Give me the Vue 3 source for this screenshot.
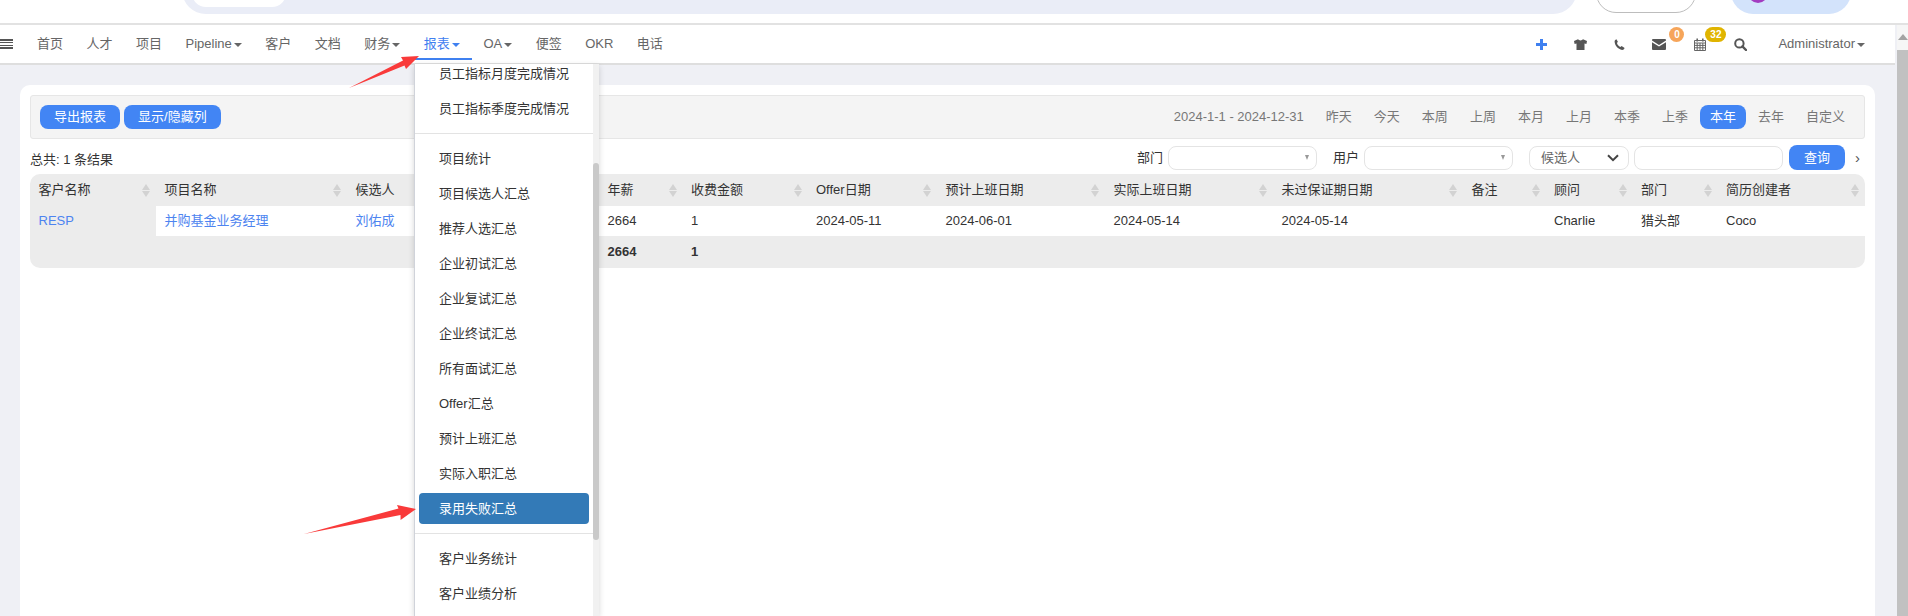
<script setup>
const navItems = [
  { label: '首页' }, { label: '人才' }, { label: '项目' }, { label: 'Pipeline', caret: true },
  { label: '客户' }, { label: '文档' }, { label: '财务', caret: true },
  { label: '报表', caret: true, active: true }, { label: 'OA', caret: true },
  { label: '便签' }, { label: 'OKR' }, { label: '电话' }
]
const ranges = ['昨天', '今天', '本周', '上周', '本月', '上月', '本季', '上季', '本年', '去年', '自定义']
const columns = [
  { t: '客户名称', w: 126 }, { t: '项目名称', w: 191 }, { t: '候选人', w: 252 }, { t: '年薪', w: 83.5 },
  { t: '收费金额', w: 125 }, { t: 'Offer日期', w: 129.5 }, { t: '预计上班日期', w: 168 }, { t: '实际上班日期', w: 168 },
  { t: '未过保证期日期', w: 190 }, { t: '备注', w: 82.5 }, { t: '顾问', w: 87 }, { t: '部门', w: 85 }, { t: '简历创建者', w: 147.5 }
]
const row = ['2664', '1', '2024-05-11', '2024-06-01', '2024-05-14', '2024-05-14', '', 'Charlie', '猎头部', 'Coco']
const menuTop = ['员工指标月度完成情况', '员工指标季度完成情况']
const menuMid = ['项目统计', '项目候选人汇总', '推荐人选汇总', '企业初试汇总', '企业复试汇总', '企业终试汇总', '所有面试汇总', 'Offer汇总', '预计上班汇总', '实际入职汇总', '录用失败汇总']
const menuEnd = ['客户业务统计', '客户业绩分析']
</script>

<template>
  <div class="page">
    <header class="topbar">
      <div class="search-pill"><div class="search-inner"></div></div>
      <div class="top-btn"></div>
      <div class="avatar-pill"><span class="avatar-dot"></span></div>
    </header>
    <div class="main">
      <div class="content">
        <nav class="nav">
          <div class="burger"><i></i><i></i><i></i><i></i></div>
          <a v-for="n in navItems" :key="n.label" class="nav-item" :class="{ active: n.active }">
            {{ n.label }}<span v-if="n.caret" class="caret"></span>
          </a>
          <div class="nav-right">
            <span class="ic w40 plus">
              <svg width="11" height="11" viewBox="0 0 11 11"><path d="M4 0h3v4h4v3H7v4H4V7H0V4h4z" fill="#3f80f0"/></svg>
            </span>
            <span class="ic w39">
              <svg width="13" height="11" viewBox="0 0 13 11"><path d="M4 0.3 L5 1 Q6.5 1.8 8 1 L9 .3 L13 2 L12.4 5 L10.5 4.6 V11 H2.5 V4.6 L.6 5 L0 2 Z" fill="#555"/></svg>
            </span>
            <span class="ic w39">
              <svg width="11" height="11" viewBox="0 0 11 11"><path d="M2.4 .2 L3.9 2.8 L3 4 C3.2 5.6 4.6 7.4 6.4 8 L7.6 7.1 L10.6 9 C10.2 10.2 9.2 11 8.1 10.9 C4 10.4 .8 6.6 .6 2.6 C.5 1.6 1.2 .6 2.4 .2 Z" fill="#555"/></svg>
            </span>
            <span class="ic w40 env">
              <svg width="14" height="11" viewBox="0 0 14 11"><path d="M1 0h12a1 1 0 0 1 1 1v.6L7 6 0 1.6V1a1 1 0 0 1 1-1z M0 3.2 L7 7.6 L14 3.2V10a1 1 0 0 1-1 1H1a1 1 0 0 1-1-1z" fill="#555"/></svg>
              <b class="badge orange">0</b>
            </span>
            <span class="ic w41 cal">
              <svg width="12" height="13" viewBox="0 0 12 13"><path d="M.5 2.5h11v10H.5z M.5 5h11 M.5 7.4h11 M.5 9.8h11 M3.2 5v7.5 M6 5v7.5 M8.8 5v7.5" fill="none" stroke="#666" stroke-width="1"/><path d="M2.4 .5h1.6v3H2.4z M8 .5h1.6v3H8z" fill="#666"/></svg>
              <b class="badge gold">32</b>
            </span>
            <span class="ic w40">
              <svg width="13" height="13" viewBox="0 0 13 13"><circle cx="5.4" cy="5.4" r="4.2" fill="none" stroke="#555" stroke-width="2"/><path d="M8.4 8.4 L12 12" stroke="#555" stroke-width="2.4" stroke-linecap="round"/></svg>
            </span>
            <a class="admin">Administrator<span class="caret"></span></a>
          </div>
        </nav>

        <div class="body-area">
          <section class="card">
            <div class="toolbar">
              <div class="tool-left">
                <button class="pill-btn">导出报表</button>
                <button class="pill-btn">显示/隐藏列</button>
              </div>
              <div class="tool-right">
                <span class="date-range">2024-1-1 - 2024-12-31</span>
                <a v-for="r in ranges" :key="r" class="range" :class="{ on: r === '本年' }">{{ r }}</a>
              </div>
            </div>

            <div class="filter-row">
              <div class="total">总共: 1 条结果</div>
              <div class="filters">
                <label class="f-label">部门</label>
                <div class="f-box sel"><span class="tri"></span></div>
                <label class="f-label second">用户</label>
                <div class="f-box sel"><span class="tri"></span></div>
                <div class="f-box person">
                  候选人
                  <svg width="12" height="8" viewBox="0 0 12 8"><path d="M1 1.2 L6 6.2 L11 1.2" fill="none" stroke="#444" stroke-width="2"/></svg>
                </div>
                <div class="f-box text"></div>
                <button class="query">查询</button>
                <span class="more">›</span>
              </div>
            </div>

            <div class="table-wrap">
              <table class="grid">
                <colgroup>
                  <col v-for="c in columns" :key="c.t" :style="{ width: c.w + 'px' }" />
                </colgroup>
                <thead>
                  <tr>
                    <th v-for="c in columns" :key="c.t">
                      <div class="th-in">
                        <span>{{ c.t }}</span>
                        <span class="sort"><i class="up"></i><i class="down"></i></span>
                      </div>
                    </th>
                  </tr>
                </thead>
                <tbody>
                  <tr class="data">
                    <td class="fixed"><a class="lnk">RESP</a></td>
                    <td><a class="lnk">并购基金业务经理</a></td>
                    <td><a class="lnk">刘佑成</a></td>
                    <td v-for="(v, i) in row" :key="i">{{ v }}</td>
                  </tr>
                  <tr class="sum">
                    <td></td><td></td><td></td>
                    <td>2664</td><td>1</td>
                    <td></td><td></td><td></td><td></td><td></td><td></td><td></td><td></td>
                  </tr>
                </tbody>
              </table>
            </div>
          </section>
        </div>

        <aside class="menu">
          <div class="menu-list">
            <a v-for="m in menuTop" :key="m" class="m-item">{{ m }}</a>
            <div class="m-div"></div>
            <a v-for="m in menuMid" :key="m" class="m-item" :class="{ sel: m === '录用失败汇总' }">{{ m }}</a>
            <div class="m-div"></div>
            <a v-for="m in menuEnd" :key="m" class="m-item">{{ m }}</a>
          </div>
          <div class="m-scroll"><div class="m-thumb"></div></div>
        </aside>

        <svg class="arrows" width="1897" height="591" viewBox="0 25 1897 591">
          <path d="M349 88 L403 60.5 L401 57 L419 56 L406 69 L404.5 65.5 Z" fill="#f93a3a"/>
          <path d="M304 534 L398.5 508.5 L397 505 L416 509 L400.6 520 L400.5 515 Z" fill="#f93a3a"/>
        </svg>
      </div>
      <div class="vscroll">
        <div class="v-arrow"><span></span></div>
        <div class="v-thumb"></div>
      </div>
    </div>
  </div>
</template>

<style>
html, body { margin: 0; overflow: hidden; background: #fff; }
</style>

<style scoped>
.page {
  width: 1908px;
  height: 616px;
  overflow: hidden;
  font: 13px/1.2 "Liberation Sans", "Noto Sans CJK SC", sans-serif;
  color: #333;
  background: #fff;
}
.topbar {
  height: 23px;
  display: flex;
  align-items: flex-start;
  overflow: hidden;
  border-bottom: 2px solid #e2e2e2;
  box-sizing: content-box;
  padding-left: 182px;
}
.search-pill {
  width: 1395px;
  height: 48px;
  margin-top: -34px;
  border-radius: 26px;
  background: #eaedf7;
  display: flex;
  align-items: flex-end;
  flex: none;
  padding: 0 0 7.5px 10px;
  box-sizing: border-box;
}
.search-inner { width: 94px; height: 30px; background: #fff; border-radius: 14px; }
.top-btn {
  width: 100px;
  height: 40px;
  margin: -27px 0 0 19px;
  box-sizing: border-box;
  border: 1px solid #bdbdbd;
  border-radius: 20px;
  background: #fff;
  flex: none;
}
.avatar-pill {
  width: 120px;
  height: 44px;
  margin: -30px 0 0 35px;
  border-radius: 22px;
  background: #d3e3fb;
  position: relative;
  flex: none;
}
.avatar-dot {
  position: absolute;
  left: 17px;
  top: 13px;
  width: 20px;
  height: 20px;
  border-radius: 50%;
  background: #a23cc0;
}
.main { height: 591px; display: flex; }
.content {
  width: 1897px;
  flex: none;
  position: relative;
  background: #eff0f5;
  display: flex;
  flex-direction: column;
}
.nav {
  height: 40px;
  box-sizing: border-box;
  width: 1895px;
  background: #fff;
  border-bottom: 2px solid #dedede;
  display: flex;
  align-items: flex-start;
  color: #666;
  flex: none;
}
.burger {
  width: 25.25px;
  height: 38px;
  padding-top: 14px;
  box-sizing: border-box;
  flex: none;
}
.burger i { display: block; width: 13px; height: 1.5px; background: #555; margin-bottom: 1.3px; }
.nav-item {
  margin-top: 4px;
  height: 31px;
  box-sizing: border-box;
  padding: 0 11.75px;
  line-height: 29px;
  border-bottom: 2px solid transparent;
  white-space: nowrap;
  flex: none;
}
.nav-item.active { color: #3f80f0; border-bottom-color: #3f80f0; }
.caret {
  display: inline-block;
  width: 0;
  height: 0;
  margin-left: 2px;
  vertical-align: 1px;
  border-top: 4px solid currentColor;
  border-left: 4px solid transparent;
  border-right: 4px solid transparent;
}
.nav-right {
  margin-left: auto;
  display: flex;
  align-items: center;
  height: 38px;
  padding-right: 30px;
}
.ic {
  position: relative;
  height: 38px;
  display: flex;
  align-items: center;
  justify-content: center;
  flex: none;
}
.ic svg { margin-top: 1px; }
.w39 { width: 39px; }
.w40 { width: 40px; }
.w41 { width: 41px; }
.badge {
  position: absolute;
  top: 2px;
  height: 15px;
  border-radius: 8px;
  color: #fff;
  font: bold 10px/15px "Liberation Sans", sans-serif;
  text-align: center;
}
.orange { left: 30px; width: 15px; background: #f6a55a; }
.gold { left: 26px; width: 21px; background: #e0b400; }
.admin { margin-left: 18px; white-space: nowrap; }
.body-area { flex: 1; min-height: 0; padding: 20px 22px 0 20px; }
.card {
  height: 100%;
  background: #fff;
  border-radius: 10px 10px 0 0;
  padding: 10px 10px 0;
  box-sizing: border-box;
}
.toolbar {
  height: 44px;
  box-sizing: border-box;
  background: #f4f4f4;
  border: 1px solid #e6e6e6;
  border-radius: 3px;
  display: flex;
  align-items: center;
  justify-content: space-between;
  padding: 0 9px;
}
.tool-left { display: flex; gap: 4px; }
.pill-btn {
  height: 24px;
  padding: 0 14px;
  border: 0;
  border-radius: 8px;
  background: #4285f4;
  color: #fff;
  font: inherit;
}
.tool-right { display: flex; align-items: center; gap: 2px; color: #777; }
.date-range { margin-right: 10px; white-space: nowrap; }
.range { height: 24px; line-height: 23px; padding: 0 10px; border-radius: 8px; }
.range.on { background: #4285f4; color: #fff; }
.filter-row {
  height: 35px;
  display: flex;
  justify-content: space-between;
  align-items: center;
}
.total { margin-top: 7px; color: #333; }
.filters { display: flex; align-items: center; height: 25px; margin-top: 2px; }
.f-label { margin-right: 5px; }
.f-label.second { margin-left: 16px; }
.f-box {
  height: 24px;
  box-sizing: border-box;
  width: 149px;
  background: #fff;
  border: 1px solid #e4e4e4;
  border-radius: 8px;
  display: flex;
  align-items: center;
}
.sel { justify-content: flex-end; padding-right: 7px; }
.tri {
  width: 0;
  height: 0;
  border-top: 5px solid #999;
  border-left: 2.5px solid transparent;
  border-right: 2.5px solid transparent;
}
.person {
  width: 100px;
  margin-left: 16px;
  padding: 0 9px 0 11px;
  justify-content: space-between;
  color: #666;
}
.text { margin-left: 5px; }
.query {
  width: 56px;
  height: 25px;
  margin-left: 6px;
  border: 0;
  border-radius: 8px;
  background: #4285f4;
  color: #fff;
  font: inherit;
  padding: 0;
}
.more { width: 20px; text-align: right; padding-right: 5px; box-sizing: border-box; color: #555; font-size: 15px; }
.table-wrap { border-radius: 10px; overflow: hidden; width: 1835px; }
.grid { table-layout: fixed; border-collapse: collapse; width: 1835px; }
.grid th {
  height: 32px;
  padding: 0 6px 0 8.5px;
  background: #ececec;
  font-weight: 400;
  text-align: left;
  color: #333;
}
.th-in { display: flex; justify-content: space-between; align-items: center; }
.sort { display: flex; flex-direction: column; gap: 1px; }
.sort i {
  width: 0;
  height: 0;
  border-left: 4px solid transparent;
  border-right: 4px solid transparent;
}
.sort .up { border-bottom: 6.5px solid #d2d2d2; }
.sort .down { border-top: 6.5px solid #d2d2d2; }
.grid td { padding: 0 0 0 8.5px; white-space: nowrap; }
.data td { height: 30px; background: #fff; }
.data td.fixed { background: #ececec; }
.sum td { height: 32px; background: #ececec; font-weight: 700; }
.lnk { color: #4d84f0; }
.menu {
  position: absolute;
  left: 414px;
  top: 39px;
  width: 185px;
  height: 552px;
  box-sizing: border-box;
  background: #fff;
  border-left: 1.5px solid #d0d3da;
  box-shadow: 0 2px 6px rgba(0, 0, 0, .16);
  display: flex;
  overflow: hidden;
}
.menu-list { width: 178px; margin-top: -8px; flex: none; display: flex; flex-direction: column; }
.m-item {
  display: block;
  height: 31px;
  line-height: 31px;
  margin: 2px 4px;
  padding-left: 20px;
  border-radius: 4px;
  color: #333;
  white-space: nowrap;
  flex: none;
}
.m-item.sel { background: #337ab7; color: #fff; }
.m-div { height: 1px; margin: 7px 0; background: #e3e3e3; flex: none; }
.m-scroll { flex: 1; background: #f1f1f1; padding-top: 99px; box-sizing: border-box; height: 100%; }
.m-thumb { height: 377px; background: #c9c9c9; border-radius: 3px; }
.arrows { position: absolute; left: 0; top: 0; pointer-events: none; }
.vscroll { width: 11px; background: #f6f6f6; display: flex; flex-direction: column; flex: none; }
.v-arrow { height: 25px; display: flex; justify-content: center; padding-top: 9px; box-sizing: border-box; }
.v-arrow span {
  width: 0;
  height: 0;
  border-left: 5px solid transparent;
  border-right: 5px solid transparent;
  border-bottom: 6px solid #a3a3a3;
}
.v-thumb { flex: 1; background: #c1c1c1; }
</style>
